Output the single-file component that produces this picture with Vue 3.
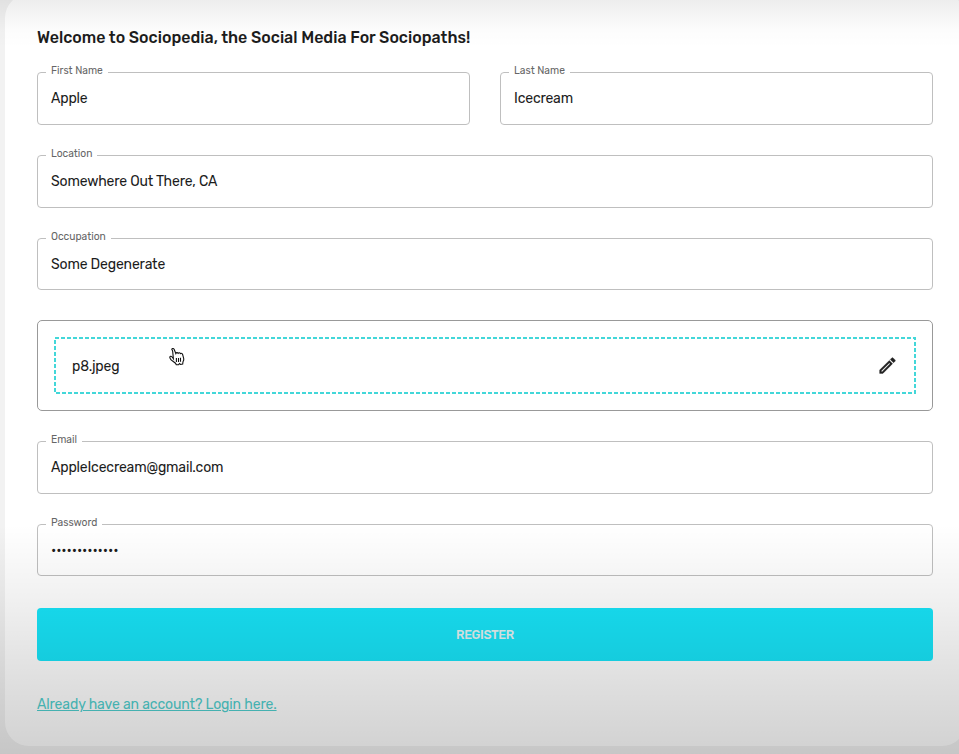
<script setup>
import { reactive } from "vue";

const fields = reactive([
  { id: "first", label: "First Name", value: "Apple" },
  { id: "last", label: "Last Name", value: "Icecream" },
  { id: "location", label: "Location", value: "Somewhere Out There, CA" },
  { id: "occupation", label: "Occupation", value: "Some Degenerate" },
  { id: "picture", value: "p8.jpeg" },
  { id: "email", label: "Email", value: "AppleIcecream@gmail.com" },
  { id: "password", label: "Password", value: "•••••••••••••" },
]);
</script>

<template>
  <div class="page">
    <main class="card">
      <h1 class="title">Welcome to Sociopedia, the Social Media For Sociopaths!</h1>
      <form class="form" @submit.prevent>
        <template v-for="f in fields" :key="f.id">
          <fieldset v-if="f.label" class="field" :class="f.id">
            <legend><span>{{ f.label }}</span></legend>
            <div class="value"><span>{{ f.value }}</span></div>
          </fieldset>
          <div v-else class="upload">
            <div class="drop">
              <svg class="dashes"><rect x="1" y="1" width="860" height="55" /></svg>
              <span class="file">{{ f.value }}</span>
              <svg class="edit" viewBox="0 0 24 24">
                <path d="m14.06 9.02.92.92L5.92 19H5v-.92zM17.66 3c-.25 0-.51.1-.7.29l-1.83 1.83 3.75 3.75 1.83-1.83c.39-.39.39-1.02 0-1.41l-2.34-2.34c-.2-.2-.45-.29-.71-.29m-3.6 3.19L3 17.25V21h3.75L17.81 9.94z" />
              </svg>
              <svg class="pointer" viewBox="0 0 16 18">
                <path d="M4.4 10.8 3.7 3.5C3.4 1.2 2.2 1.8 3 .9c.8-.8 1.8-.4 2.2.6l1.6 4c.4-1.1 1.8-1.1 2.3-.2.6-.8 1.9-.7 2.3.3.8-.6 2-.2 2.2.9l1 3.6c.4 1.5.1 2.6-.6 3.6l-.3 2.4-2.2.4-1-1-1 1.3H7.3l-.8-1.600-4.400-3.300c-.8-1-1.500-1.900-1.300-2.800.4-1.400 1.700-.9 2.500.2z" />
                <path class="lines" d="M7.4 10v4M9.5 10v4M11.5 9.8v4" />
              </svg>
            </div>
          </div>
        </template>
        <button class="register" type="submit">REGISTER</button>
      </form>
      <a class="login">Already have an account? Login here.</a>
    </main>
  </div>
</template>

<style>
body {
  overflow: hidden;
}
</style>

<style scoped>
.page {
  position: relative;
  box-sizing: border-box;
  width: 959px;
  height: 754px;
  padding-left: 5px;
  overflow: hidden;
  background: #f2f2f2;
  color: #1c1c1c;
  font-family: Rubik, Roboto, sans-serif;
}
.page::after {
  content: "";
  position: absolute;
  inset: 0;
  pointer-events: none;
  background:
    linear-gradient(rgba(0, 0, 0, 0.07), rgba(0, 0, 0, 0.012) 30px, transparent 48px),
    linear-gradient(transparent 525px, rgba(0, 0, 0, 0.06) 600px, rgba(0, 0, 0, 0.11) 661px, rgba(0, 0, 0, 0.18) 754px);
}
.card {
  box-sizing: border-box;
  width: 961px;
  height: 752px;
  margin-top: -6px;
  padding: 33px 32px 32px;
  border-radius: 24px;
  background: #fff;
}
.title {
  margin: 0 0 23px;
  line-height: 22px;
  font-size: 16px;
  font-weight: 500;
  white-space: nowrap;
}
.form {
  display: grid;
  grid-template-columns: 433px 433px;
  grid-template-rows: 53px 53px 52px 91px 53px 52px 53px;
  gap: 30px;
}
.field {
  box-sizing: border-box;
  display: block;
  min-width: 0;
  margin: 0;
  padding: 0;
  border: 1px solid #bfbfbf;
  border-radius: 4px;
}
.location,
.occupation,
.upload,
.email,
.password,
.register {
  grid-column: 1 / -1;
}
legend {
  height: 1px;
  margin-left: 8px;
  padding: 0 5px;
  color: #666;
  font-size: 10.27px;
  line-height: 0;
}
legend span {
  position: relative;
  top: -1px;
}
.value {
  display: flex;
  align-items: center;
  height: 51px;
  padding-left: 13px;
  font-size: 14px;
  letter-spacing: -0.17px;
}
.upload {
  box-sizing: border-box;
  padding: 16px;
  border: 1px solid #999;
  border-radius: 5px;
}
.drop {
  position: relative;
  box-sizing: border-box;
  display: flex;
  align-items: center;
  justify-content: space-between;
  height: 57px;
  padding: 0 18px;
  font-size: 14px;
  letter-spacing: -0.17px;
}
.file {
  padding-top: 2px;
}
.dashes {
  position: absolute;
  inset: 0;
  width: 862px;
  height: 57px;
  fill: none;
  stroke: #43d7d9;
  stroke-width: 2;
  stroke-dasharray: 4 2;
}
.edit {
  width: 21px;
  height: 21px;
  fill: #222;
  stroke: #222;
  stroke-width: 0.4;
}
.pointer {
  position: absolute;
  top: 11px;
  left: 115px;
  width: 16px;
  height: 18px;
  fill: #fff;
  stroke: #111;
  stroke-width: 1.1;
}
.register {
  margin-top: 2px;
  height: 53px;
  padding: 0;
  border: 0;
  border-radius: 4px;
  background: #18e5f9;
  color: #e6f2f2;
  font-family: inherit;
  font-size: 12.6px;
  font-weight: 500;
  letter-spacing: -0.35px;
}
.login {
  display: inline-block;
  margin-top: 36px;
  color: #50cfce;
  font-size: 14px;
  line-height: 20px;
  letter-spacing: -0.12px;
  text-decoration: underline;
}
</style>
